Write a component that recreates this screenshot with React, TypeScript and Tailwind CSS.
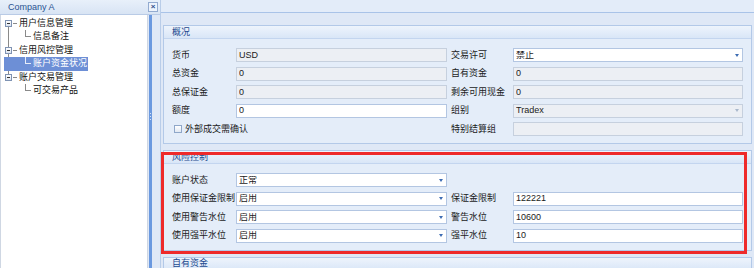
import React from "react";

type Kind = "ro" | "rw";

function Field({
  value,
  kind = "rw",
  arrow,
  className = "",
}: {
  value?: string;
  kind?: Kind;
  arrow?: "on" | "off";
  className?: string;
}) {
  const skin =
    kind === "ro"
      ? "bg-[#eceff4] border-[#c6d0de]"
      : "bg-white border-[#b3c6e2]";
  return (
    <div
      className={`flex h-[14px] items-center border pl-[2px] pr-[3px] text-[#1b1b1b] ${skin} ${className}`}
    >
      <span className="flex-1 truncate">{value}</span>
      {arrow && (
        <span
          className={`h-0 w-0 border-x-[2.5px] border-t-[3px] border-x-transparent ${
            arrow === "on" ? "border-t-[#3d6cb3]" : "border-t-[#a9b8cc]"
          }`}
        />
      )}
    </div>
  );
}

function Label({ text, w }: { text: string; w: string }) {
  return <span className={`${w} shrink-0 whitespace-nowrap text-[#1b1b1b]`}>{text}</span>;
}

function Panel({ title, children }: { title: string; children?: React.ReactNode }) {
  return (
    <div className="border border-[#b3c9e8] bg-[#e4edf9]">
      <div className="flex h-[13px] items-center border-b border-[#c3d5ef] bg-gradient-to-b from-[#eef4fc] to-[#d9e6f7] pl-[8px] text-[#1d4a8f]">
        {title}
      </div>
      {children && (
        <div className="flex flex-col gap-[4.5px] px-[8px] pt-[9px] pb-[7px]">{children}</div>
      )}
    </div>
  );
}

function Row({ children }: { children: React.ReactNode }) {
  return <div className="flex h-[14px] items-center">{children}</div>;
}

function RootIcon() {
  return (
    <span className="relative z-10 flex h-[7px] w-[7px] items-center justify-center border border-[#7f93b3] bg-gradient-to-b from-white to-[#dde5f0]">
      <span className="h-px w-[3px] bg-[#333]" />
    </span>
  );
}

function TreeRoot({ text }: { text: string }) {
  return (
    <div className="flex h-[13.5px] items-center pl-[4px]">
      <RootIcon />
      <span className="ml-px h-px w-[4px] bg-[#8a8a8a]" />
      <span className="ml-[2px] text-[#111]">{text}</span>
    </div>
  );
}

function TreeLeaf({ text, selected }: { text: string; selected?: boolean }) {
  if (selected) {
    return (
      <div className="ml-[3px] flex h-[13.5px] w-[84px] bg-[#6d8fd6]">
        <span className="ml-[21px] h-[7px] w-[6px] self-start border-b border-l border-[#e6ecf8]" />
        <span className="ml-[2px] self-center text-white">{text}</span>
      </div>
    );
  }
  return (
    <div className="flex h-[13.5px]">
      <span className="ml-[24px] h-[7px] w-[6px] self-start border-b border-l border-[#8a8a8a]" />
      <span className="ml-[2px] self-center text-[#111]">{text}</span>
    </div>
  );
}

export default function App() {
  return (
    <div className="relative flex h-[268px] w-[754px] overflow-hidden bg-[#dfe8f6] font-['Liberation_Sans','Noto_Sans_CJK_SC',sans-serif] text-[9px] leading-none">
      {/* left navigation */}
      <div className="flex w-[160px] flex-col">
        <div className="flex h-[15px] items-center border-b border-[#b9cbe6] bg-gradient-to-b from-[#e8f0fa] to-[#d8e4f4] pl-[8px] text-[#2a5392]">
          <span className="flex-1">Company A</span>
          <span className="mr-[2px] flex h-[10px] w-[10px] items-center justify-center border border-[#93abd0] bg-[#edf3fc] text-[8px] font-bold text-[#2b4f8a]">
            ×
          </span>
        </div>
        <div className="flex flex-1">
          <div className="relative w-[148px] border-r border-l border-[#cfd7e3] bg-white pt-[1.5px]">
            <div className="absolute top-[12px] left-[6.5px] h-[47px] w-px bg-[#8a8a8a]" />
            <div className="relative">
              <TreeRoot text="用户信息管理" />
              <TreeLeaf text="信息备注" />
              <TreeRoot text="信用风控管理" />
              <TreeLeaf text="账户资金状况" selected />
              <TreeRoot text="账户交易管理" />
              <TreeLeaf text="可交易产品" />
            </div>
          </div>
          <div className="flex w-[12px] pl-[1px]">
            <div className="flex w-[3px] flex-col items-center gap-[2px] bg-[#6b99df] pt-[98px]">
              <span className="h-px w-px bg-[#d6e3f7]" />
              <span className="h-px w-px bg-[#d6e3f7]" />
              <span className="h-px w-px bg-[#d6e3f7]" />
            </div>
          </div>
        </div>
      </div>

      {/* content */}
      <div className="flex flex-1 flex-col border-l border-[#b9cde9]">
        <div className="h-[13px] shrink-0 border-b border-[#a9c3e8] bg-[#e3ecf9]" />
        <div className="flex flex-col gap-[6px] px-[2px] pt-[12px]">
          <Panel title="概况">
            <Row>
              <Label text="货币" w="w-[64px]" />
              <Field value="USD" kind="ro" className="w-[211px]" />
              <span className="w-[4px]" />
              <Label text="交易许可" w="w-[62px]" />
              <Field value="禁止" arrow="on" className="flex-1" />
            </Row>
            <Row>
              <Label text="总资金" w="w-[64px]" />
              <Field value="0" kind="ro" className="w-[211px]" />
              <span className="w-[4px]" />
              <Label text="自有资金" w="w-[62px]" />
              <Field value="0" kind="ro" className="flex-1" />
            </Row>
            <Row>
              <Label text="总保证金" w="w-[64px]" />
              <Field value="0" kind="ro" className="w-[211px]" />
              <span className="w-[4px]" />
              <Label text="剩余可用现金" w="w-[62px]" />
              <Field value="0" kind="ro" className="flex-1" />
            </Row>
            <Row>
              <Label text="额度" w="w-[64px]" />
              <Field value="0" className="w-[211px]" />
              <span className="w-[4px]" />
              <Label text="组别" w="w-[62px]" />
              <Field value="Tradex" kind="ro" arrow="off" className="flex-1" />
            </Row>
            <Row>
              <div className="flex w-[275px] items-center pl-[2px]">
                <span className="h-[8px] w-[8px] border border-[#8fa7c9] bg-gradient-to-b from-white to-[#e1e8f2]" />
                <span className="ml-[3px] text-[#1b1b1b]">外部成交需确认</span>
              </div>
              <span className="w-[4px]" />
              <Label text="特别结算组" w="w-[62px]" />
              <Field kind="ro" className="flex-1" />
            </Row>
          </Panel>

          <Panel title="风险控制">
            <Row>
              <Label text="账户状态" w="w-[64px]" />
              <Field value="正常" arrow="on" className="w-[211px]" />
            </Row>
            <Row>
              <Label text="使用保证金限制" w="w-[64px]" />
              <Field value="启用" arrow="on" className="w-[211px]" />
              <span className="w-[4px]" />
              <Label text="保证金限制" w="w-[62px]" />
              <Field value="122221" className="flex-1" />
            </Row>
            <Row>
              <Label text="使用警告水位" w="w-[64px]" />
              <Field value="启用" arrow="on" className="w-[211px]" />
              <span className="w-[4px]" />
              <Label text="警告水位" w="w-[62px]" />
              <Field value="10600" className="flex-1" />
            </Row>
            <Row>
              <Label text="使用强平水位" w="w-[64px]" />
              <Field value="启用" arrow="on" className="w-[211px]" />
              <span className="w-[4px]" />
              <Label text="强平水位" w="w-[62px]" />
              <Field value="10" className="flex-1" />
            </Row>
          </Panel>

          <Panel title="自有资金" />
        </div>
      </div>

      {/* red annotation box */}
      <div className="pointer-events-none absolute top-[152px] left-[161px] h-[102px] w-[586px] border-[3px] border-[#ee2a2a]" />
    </div>
  );
}
